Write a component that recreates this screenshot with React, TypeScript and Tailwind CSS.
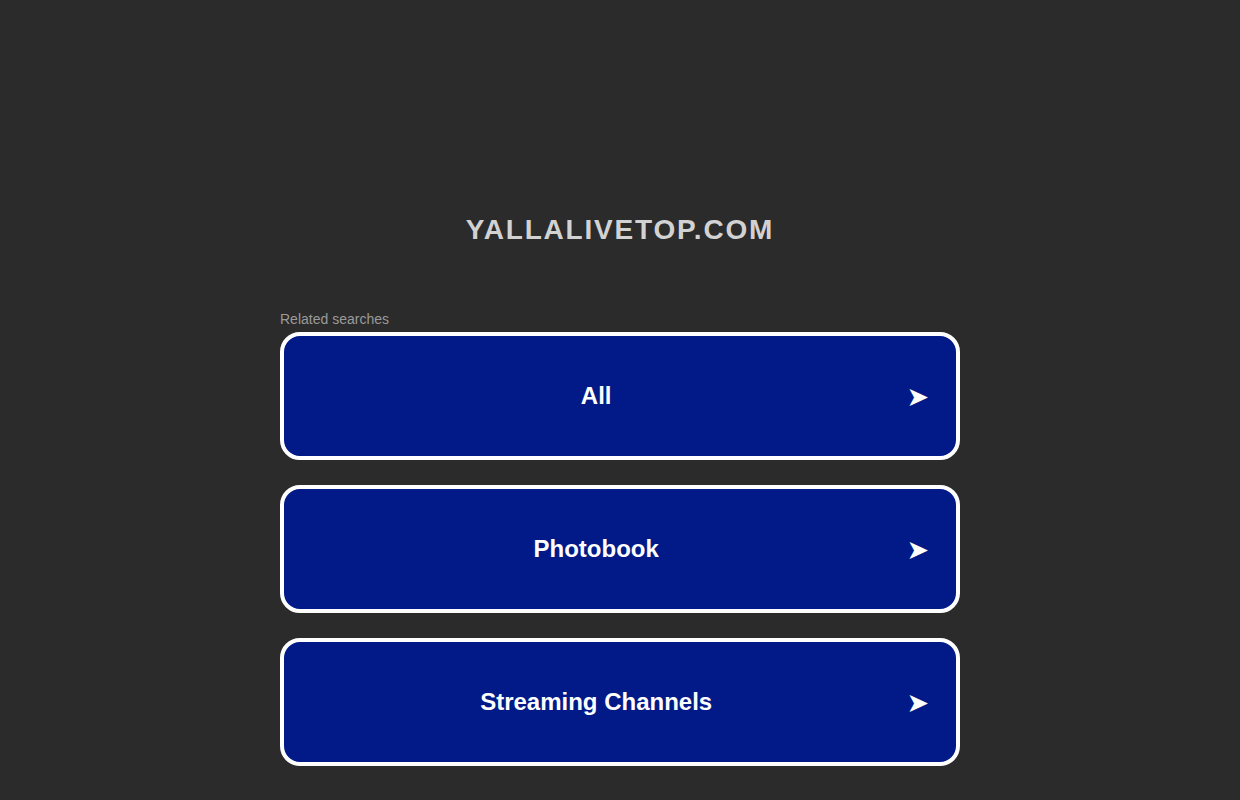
import React from 'react'

const searches = ['All', 'Photobook', 'Streaming Channels']

function SearchBox({ label }: { label: string }) {
    return (
        <a
            href="#"
            className="flex h-[128px] items-center rounded-[20px] border-4 border-white bg-[#011a88] text-white no-underline"
        >
            <span className="flex-1 pl-[2px] text-center text-[24px] font-bold">{label}</span>
            <span className="pr-[27px] text-[27px] leading-none" style={{ fontFamily: '"DejaVu Sans", sans-serif' }}>➤</span>
        </a>
    )
}

export default function App() {
    return (
        <div className="min-h-screen bg-[#2b2b2b] pt-[213px]" style={{ fontFamily: '"Liberation Sans", Arial, sans-serif' }}>
            <h1 className="text-center text-[28px] font-bold leading-[34px] text-[#d2d2d2] tracking-[1.8px]">
                YALLALIVETOP.COM
            </h1>

            <div className="mx-auto mt-[64px] w-[680px]">
                <p className="mb-[5px] text-[14px] leading-[16px] text-[#9a9a9a]">Related searches</p>
                <div className="flex flex-col gap-[25px]">
                    {searches.map(s => (
                        <SearchBox key={s} label={s} />
                    ))}
                </div>
            </div>
        </div>
    )
}
